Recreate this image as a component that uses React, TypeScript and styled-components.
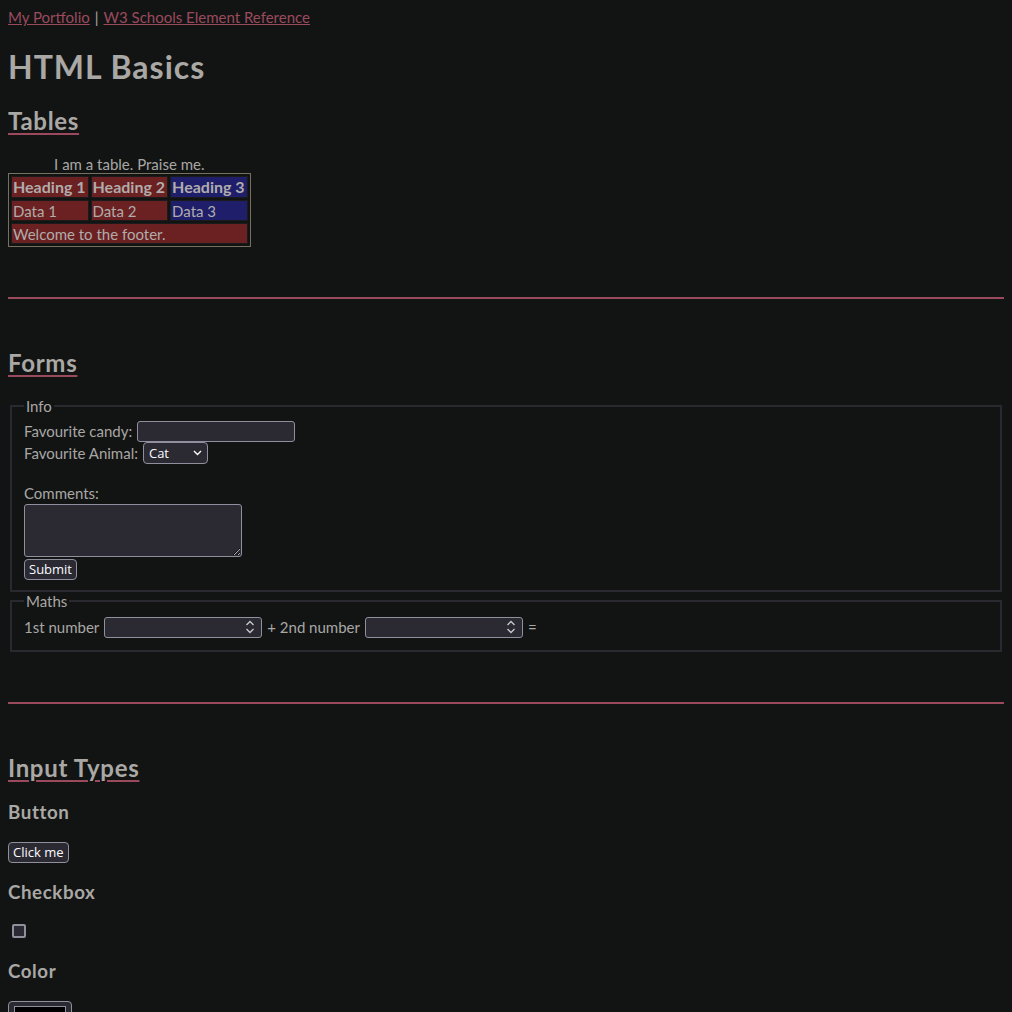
import React from "react";
import styled, { createGlobalStyle } from "styled-components";

const Global = createGlobalStyle`
  html, body { background: #121414; }
  body {
    margin: 8px;
    font-family: "Lato", "Open Sans", sans-serif;
    font-size: 15px;
    line-height: 18.4px;
    color: #a9a7a4;
  }
`;

const NavBar = styled.div`
  display: flex;
  gap: 5px;
  align-items: baseline;
`;

const NavLink = styled.a`
  color: #9b4a5d;
  text-decoration: underline;
`;

const Title = styled.h1`
  font-size: 32px;
  line-height: 1.15;
  font-weight: 700;
  letter-spacing: 1px;
  margin: 23px 0 21px;
  color: #aaa8a5;
`;

const SectionTitle = styled.h2`
  font-size: 24px;
  line-height: 1.15;
  font-weight: 700;
  letter-spacing: 0.7px;
  margin: 20px 0;
  color: #aaa8a5;
  text-decoration: underline;
  text-decoration-color: #9b4a5d;
  text-decoration-thickness: 2px;
  text-underline-offset: 3px;
`;

const SubTitle = styled.h3`
  font-size: 18.72px;
  line-height: 1.15;
  font-weight: 700;
  letter-spacing: 0.6px;
  margin: 18.72px 0;
  color: #aaa8a5;
`;

const Table = styled.table`
  border: 1px solid #76705f;
  border-spacing: 2px;
  margin-top: 2px;
`;

const Caption = styled.caption`
  text-align: center;
`;

const Cell = styled.td<{ $blue?: boolean; $head?: boolean }>`
  background: ${(p) => (p.$blue ? "#1f1e6b" : "#6b2021")};
  border: 1px solid #1b1b1b;
  padding: 1px 2px 0 1px;
  font-size: ${(p) => (p.$head ? "16px" : "15px")};
  font-weight: ${(p) => (p.$head ? 700 : 400)};
  text-align: left;
  color: #b0acab;
`;

const Rule = styled.hr`
  border: none;
  border-top: 1px solid #9b4a5d;
  border-bottom: 1px solid #9b4a5d;
  height: 0;
  margin: 50px 0 50px;
`;

const Fieldset = styled.fieldset<{ $pt: number; $pb: number }>`
  border: 2px solid #2a2930;
  margin: 0 2px;
  padding: ${(p) => `${p.$pt}px 12px ${p.$pb}px 12px`};
`;

const Legend = styled.legend`
  padding: 0 2px;
`;

const Row = styled.div`
  display: flex;
  align-items: center;
  gap: 5px;
  min-height: 22px;
`;

const Spacer = styled.div`
  height: 20px;
`;

const TextInput = styled.input`
  width: 158px;
  height: 21px;
  box-sizing: border-box;
  background: #2b2a33;
  border: 1px solid #8f8f9d;
  border-radius: 3px;
  color: #fbfbfe;
  padding: 0 4px;
`;

const SelectWrap = styled.div`
  position: relative;
  display: inline-flex;
`;

const Select = styled.select`
  appearance: none;
  width: 65px;
  height: 22px;
  box-sizing: border-box;
  background: #2b2a33;
  border: 1px solid #8f8f9d;
  border-radius: 4px;
  color: #fbfbfe;
  font-family: "Open Sans", "DejaVu Sans", sans-serif;
  font-size: 13px;
  padding: 0 5px;
`;

const Chevron = styled.svg`
  position: absolute;
  right: 6px;
  top: 8px;
  pointer-events: none;
`;

const TextArea = styled.textarea`
  display: block;
  width: 218px;
  height: 53px;
  box-sizing: border-box;
  background: #2b2a33;
  border: 1px solid #8f8f9d;
  border-radius: 3px;
  color: #fbfbfe;
  margin: 1px 0 2px;
  resize: both;
`;

const Button = styled.button`
  display: block;
  background: #2b2a33;
  border: 1px solid #8f8f9d;
  border-radius: 4px;
  color: #fbfbfe;
  font-family: "Open Sans", "DejaVu Sans", sans-serif;
  font-size: 13px;
  height: 21px;
  padding: 0 4px;
  margin: 0;
  line-height: 1;
`;

const NumberBox = styled.div`
  display: inline-flex;
  align-items: center;
  width: 158px;
  height: 21px;
  box-sizing: border-box;
  background: #2b2a33;
  border: 1px solid #8f8f9d;
  border-radius: 3px;
  padding: 0 6px 0 4px;
`;

const NumberField = styled.input`
  flex: 1;
  min-width: 0;
  background: transparent;
  border: none;
  color: #fbfbfe;
  outline: none;
  &::-webkit-inner-spin-button,
  &::-webkit-outer-spin-button {
    -webkit-appearance: none;
    margin: 0;
  }
`;

const CheckRow = styled.div`
  padding: 2px 4px 4px;
`;

const Checkbox = styled.span`
  display: block;
  width: 10px;
  height: 10px;
  background: #2b2a33;
  border: 2px solid #8f8f9d;
  border-radius: 2px;
  box-sizing: content-box;
`;

const ColorBox = styled.div`
  width: 64px;
  height: 30px;
  box-sizing: border-box;
  background: #2b2a33;
  border: 1px solid #8f8f9d;
  border-radius: 4px;
  padding: 4px 5px;
`;

const Swatch = styled.div`
  background: #000;
  border: 1px solid #8f8f9d;
  height: 100%;
  box-sizing: border-box;
`;

const Block = styled.div``;

const Spin = () => (
  <svg width="10" height="16" viewBox="0 0 10 16" fill="none" stroke="#c8c8d0" strokeWidth="1.3">
    <path d="M1.5 6 L5 2.5 L8.5 6" />
    <path d="M1.5 10 L5 13.5 L8.5 10" />
  </svg>
);

export default function App() {
  return (
    <>
      <Global />
      <NavBar>
        <NavLink href="#">My Portfolio</NavLink>
        <span>|</span>
        <NavLink href="#">W3 Schools Element Reference</NavLink>
      </NavBar>
      <Title>HTML Basics</Title>
      <SectionTitle>Tables</SectionTitle>
      <Table>
        <Caption>I am a table. Praise me.</Caption>
        <thead>
          <tr>
            <Cell as="th" $head>Heading 1</Cell>
            <Cell as="th" $head>Heading 2</Cell>
            <Cell as="th" $head $blue>Heading 3</Cell>
          </tr>
        </thead>
        <tbody>
          <tr>
            <Cell>Data 1</Cell>
            <Cell>Data 2</Cell>
            <Cell $blue>Data 3</Cell>
          </tr>
        </tbody>
        <tfoot>
          <tr>
            <Cell colSpan={3}>Welcome to the footer.</Cell>
          </tr>
        </tfoot>
      </Table>
      <Rule />
      <SectionTitle>Forms</SectionTitle>
      <Fieldset $pt={5} $pb={10}>
        <Legend>Info</Legend>
        <Row>
          <span>Favourite candy:</span>
          <TextInput type="text" />
        </Row>
        <Row>
          <span>Favourite Animal:</span>
          <SelectWrap>
            <Select defaultValue="cat">
              <option value="cat">Cat</option>
              <option value="dog">Dog</option>
            </Select>
            <Chevron width="9" height="6" viewBox="0 0 9 6" fill="none" stroke="#fbfbfe" strokeWidth="1.4">
              <path d="M1 1 L4.5 4.5 L8 1" />
            </Chevron>
          </SelectWrap>
        </Row>
        <Spacer />
        <Block>Comments:</Block>
        <TextArea />
        <Button>Submit</Button>
      </Fieldset>
      <Fieldset $pt={6} $pb={12}>
        <Legend>Maths</Legend>
        <Row>
          <span>1st number</span>
          <NumberBox>
            <NumberField type="number" />
            <Spin />
          </NumberBox>
          <span>+ 2nd number</span>
          <NumberBox>
            <NumberField type="number" />
            <Spin />
          </NumberBox>
          <span>=</span>
        </Row>
      </Fieldset>
      <Rule />
      <SectionTitle>Input Types</SectionTitle>
      <SubTitle>Button</SubTitle>
      <Button>Click me</Button>
      <SubTitle>Checkbox</SubTitle>
      <CheckRow>
        <Checkbox />
      </CheckRow>
      <SubTitle>Color</SubTitle>
      <ColorBox>
        <Swatch />
      </ColorBox>
    </>
  );
}
